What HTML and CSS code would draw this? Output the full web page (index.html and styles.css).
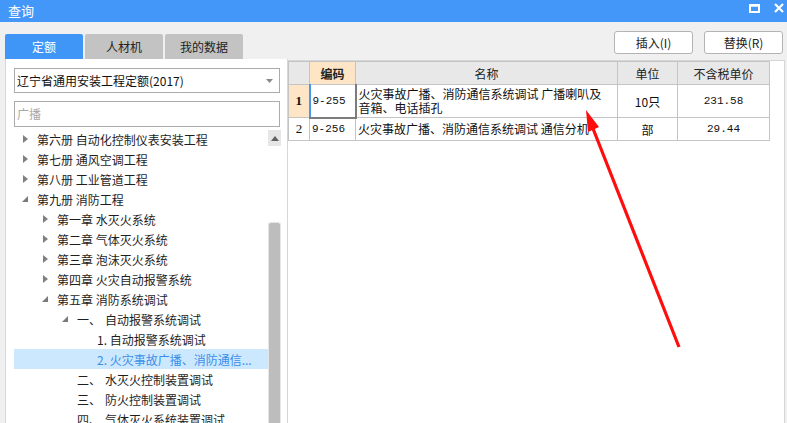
FILE: index.html
```html
<!DOCTYPE html>
<html lang="zh">
<head>
<meta charset="utf-8">
<title>查询</title>
<link rel="stylesheet" href="styles.css">
</head>
<body>
<div class="window">
  <div class="titlebar">
    <span class="title">查询</span>
    <div class="win-btns">
      <svg class="win-icon" width="11" height="9" viewBox="0 0 11 9"><rect x="1" y="1.5" width="9" height="6.5" fill="none" stroke="#fff" stroke-width="2"/><rect x="0" y="0" width="11" height="2.5" fill="#fff"/></svg>
      <svg class="win-icon" width="10" height="10" viewBox="0 0 10 10"><path d="M1 1 L9 9 M9 1 L1 9" stroke="#fff" stroke-width="2.2"/></svg>
    </div>
  </div>
  <div class="toolbar">
    <div class="tabs">
      <div class="tab active">定额</div>
      <div class="tab">人材机</div>
      <div class="tab">我的数据</div>
    </div>
    <div class="buttons">
      <button class="btn">插入(I)</button>
      <button class="btn">替换(R)</button>
    </div>
  </div>
  <div class="content">
    <div class="left">
      <div class="select">
        <span>辽宁省通用安装工程定额(2017)</span>
        <svg width="7" height="4" viewBox="0 0 7 4"><path d="M0 0 H7 L3.5 4 Z" fill="#8a8a8a"/></svg>
      </div>
      <div class="search">广播</div>
      <div class="treebox">
        <div class="tree">
          <div class="row l0"><span class="tri closed"></span><span>第六册 自动化控制仪表安装工程</span></div>
          <div class="row l0"><span class="tri closed"></span><span>第七册 通风空调工程</span></div>
          <div class="row l0"><span class="tri closed"></span><span>第八册 工业管道工程</span></div>
          <div class="row l0"><span class="tri open"></span><span>第九册 消防工程</span></div>
          <div class="row l1"><span class="tri closed"></span><span>第一章 水灭火系统</span></div>
          <div class="row l1"><span class="tri closed"></span><span>第二章 气体灭火系统</span></div>
          <div class="row l1"><span class="tri closed"></span><span>第三章 泡沫灭火系统</span></div>
          <div class="row l1"><span class="tri closed"></span><span>第四章 火灾自动报警系统</span></div>
          <div class="row l1"><span class="tri open"></span><span>第五章 消防系统调试</span></div>
          <div class="row l2"><span class="tri open"></span><span class="num">一、</span><span>自动报警系统调试</span></div>
          <div class="row l3"><span class="tri"></span><span>1. 自动报警系统调试</span></div>
          <div class="row l3 selected"><span class="tri"></span><span>2. 火灾事故广播、消防通信...</span></div>
          <div class="row l2"><span class="tri"></span><span class="num">二、</span><span>水灭火控制装置调试</span></div>
          <div class="row l2"><span class="tri"></span><span class="num">三、</span><span>防火控制装置调试</span></div>
          <div class="row l2"><span class="tri"></span><span class="num">四、</span><span>气体灭火系统装置调试</span></div>
        </div>
        <div class="scrollbar">
          <div class="sb-up"><svg width="8" height="5" viewBox="0 0 8 5"><path d="M0 5 L4 0 L8 5 Z" fill="#606060"/></svg></div>
          <div class="sb-track"><div class="sb-thumb"></div></div>
        </div>
      </div>
    </div>
    <div class="right">
      <table class="grid">
        <colgroup>
          <col class="c-no"><col class="c-code"><col class="c-name"><col class="c-unit"><col class="c-price">
        </colgroup>
        <thead>
          <tr>
            <th class="rn"></th>
            <th class="hl">编码</th>
            <th>名称</th>
            <th>单位</th>
            <th>不含税单价</th>
          </tr>
        </thead>
        <tbody>
          <tr class="r1">
            <td class="rn cur">1</td>
            <td class="code focus">9-255</td>
            <td class="name">火灾事故广播、消防通信系统调试 广播喇叭及音箱、电话插孔</td>
            <td class="center">10只</td>
            <td class="center mono">231.58</td>
          </tr>
          <tr class="r2">
            <td class="rn">2</td>
            <td class="code">9-256</td>
            <td class="name">火灾事故广播、消防通信系统调试 通信分机</td>
            <td class="center">部</td>
            <td class="center mono">29.44</td>
          </tr>
        </tbody>
      </table>
    </div>
  </div>
  <svg class="arrow" width="787" height="423" viewBox="0 0 787 423">
    <line x1="679" y1="347" x2="592" y2="126" stroke="#ff0d0d" stroke-width="3.2"/>
    <path d="M586 110 L599 127 L588 132 Z" fill="#ff0d0d"/>
  </svg>
</div>
</body>
</html>
```

FILE: styles.css
```css
* { box-sizing: border-box; }
html, body { margin: 0; padding: 0; }
body {
  width: 787px;
  height: 423px;
  overflow: hidden;
  background: #f0f0f0;
  font-family: "Noto Sans CJK SC", "Noto Sans", sans-serif;
  font-size: 12px;
  color: #1e1e1e;
}
.window {
  position: relative;
  width: 787px;
  height: 423px;
  display: flex;
  flex-direction: column;
}
.titlebar {
  height: 22px;
  background: #4297f8;
  display: flex;
  align-items: center;
  justify-content: space-between;
  padding: 0 3px 0 8px;
  flex-shrink: 0;
}
.title {
  color: #fff;
  font-size: 13px;
  line-height: 22px;
}
.win-btns {
  display: flex;
  align-items: center;
  gap: 14px;
  margin-top: -6px;
}
.toolbar {
  height: 37px;
  display: flex;
  justify-content: space-between;
  align-items: flex-end;
  padding: 0 4px 0 5px;
  flex-shrink: 0;
}
.tabs {
  display: flex;
  gap: 2px;
}
.tab {
  width: 78px;
  height: 25px;
  line-height: 25px;
  text-align: center;
  background: #c3c3c3;
  color: #222;
  border-radius: 2px 2px 0 0;
  font-size: 12px;
}
.tab.active {
  background: #3f96f6;
  color: #fff;
}
.buttons {
  display: flex;
  gap: 11px;
  margin-bottom: 5px;
}
.btn {
  width: 79px;
  height: 23px;
  background: #fff;
  border: 1px solid #b4b4b4;
  border-radius: 3px;
  font-family: "Noto Sans CJK SC", "Noto Sans", sans-serif;
  font-size: 12px;
  color: #222;
  padding: 0;
}
.content {
  flex: 1;
  display: flex;
  min-height: 0;
}
.left {
  width: 283px;
  margin-left: 5px;
  background: #fff;
  border-left: 1px solid #d6d6d6;
  border-right: 1px solid #d6d6d6;
  padding: 9px 0 0 8px;
  display: flex;
  flex-direction: column;
}
.select {
  width: 266px;
  height: 25px;
  border: 1px solid #ababab;
  display: flex;
  align-items: center;
  justify-content: space-between;
  padding: 0 6px 0 2px;
  color: #111;
}
.search {
  width: 266px;
  height: 26px;
  margin-top: 8px;
  border: 1px solid #ababab;
  padding-left: 2px;
  line-height: 24px;
  color: #a8a8a8;
}
.treebox {
  margin-top: 3px;
  flex: 1;
  display: flex;
  min-height: 0;
}
.tree {
  width: 254px;
  margin-top: -1px;
}
.row {
  height: 20px;
  display: flex;
  align-items: center;
  white-space: nowrap;
}
.row.l0 { padding-left: 7px; }
.row.l1 { padding-left: 27px; }
.row.l2 { padding-left: 47px; }
.row.l3 { padding-left: 67px; }
.row.selected {
  background: #cce8ff;
  color: #3a8ee8;
}
.tri {
  width: 10px;
  height: 10px;
  margin-right: 6px;
  position: relative;
  flex-shrink: 0;
}
.tri.closed::before {
  content: "";
  position: absolute;
  left: 2px;
  top: 1px;
  border-left: 5px solid #808080;
  border-top: 4px solid transparent;
  border-bottom: 4px solid transparent;
}
.tri.open::before {
  content: "";
  position: absolute;
  left: 1px;
  top: 2px;
  border-bottom: 6px solid #7a7a7a;
  border-left: 6px solid transparent;
}
.num {
  width: 28px;
}
.scrollbar {
  width: 13px;
  display: flex;
  flex-direction: column;
}
.sb-up {
  height: 16px;
  background: #e6e6e6;
  display: flex;
  align-items: center;
  justify-content: center;
}
.sb-track {
  flex: 1;
  display: flex;
  flex-direction: column;
  justify-content: flex-end;
  background: #fff;
}
.sb-thumb {
  height: 201px;
  background: #bdbdbd;
  border: 1px solid #e6e6e6;
  border-bottom: 0;
  border-radius: 3px 3px 0 0;
}
.right {
  flex: 1;
  margin-right: 2px;
  background: #fff;
  border: 1px solid #d6d6d6;
  border-left: 0;
  border-bottom: 0;
  margin-top: 1px;
}
.grid {
  border-collapse: collapse;
  table-layout: fixed;
  width: 481px;
}
.c-no { width: 21px; }
.c-code { width: 46px; }
.c-name { width: 262px; }
.c-unit { width: 60px; }
.c-price { width: 92px; }
.grid th, .grid td {
  border: 1px solid #c4c4c4;
  padding: 0 3px;
  font-size: 12px;
  overflow: hidden;
}
.grid th {
  background: #e8e8e8;
  height: 23px;
  font-weight: normal;
  color: #222;
  text-align: center;
}
.grid th.hl {
  background: #fde5c6;
  font-weight: bold;
}
.grid td {
  background: #fff;
  color: #111;
}
.r1 td { height: 33px; }
.r2 td { height: 23px; }
.grid td.rn {
  text-align: center;
  padding: 0;
  font-family: "Liberation Serif", serif;
  font-size: 13px;
}
.grid td.rn.cur {
  background: #fde5c6;
  font-weight: bold;
}
.grid td.code {
  font-family: "Liberation Mono", monospace;
  font-size: 11px;
  padding: 0 2px;
}
.grid td.focus {
  border-left: 2px solid #4a95ee;
  border-right: 2px solid #7c7c7c;
  border-bottom: 2px solid #7c7c7c;
}
.grid td.name {
  line-height: 14px;
  padding: 2px 12px 2px 2px;
  white-space: normal;
  word-break: break-all;
}
.grid td.center { text-align: center; }
.grid td.mono {
  font-family: "Liberation Mono", monospace;
  font-size: 11px;
}
.arrow {
  position: absolute;
  left: 0;
  top: 0;
  pointer-events: none;
}
```
